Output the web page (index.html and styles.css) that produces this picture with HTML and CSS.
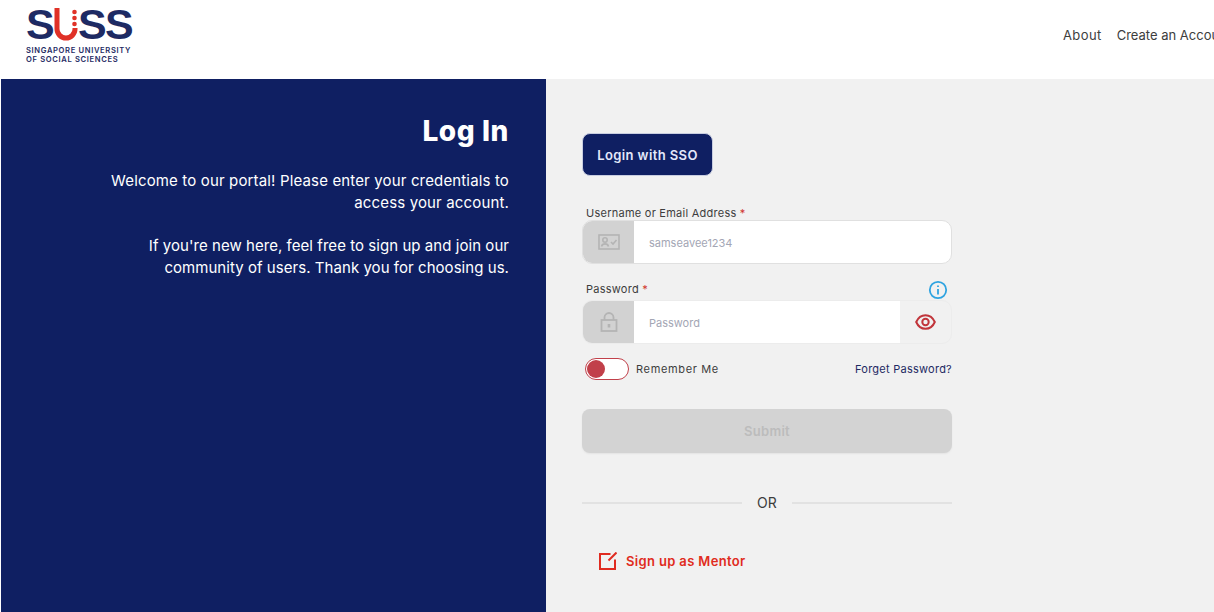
FILE: index.html
```html
<!DOCTYPE html>
<html lang="en">
<head>
<meta charset="UTF-8">
<title>SUSS - Log In</title>
<link rel="stylesheet" href="styles.css">
</head>
<body>

<!-- ===== TOP BAR ===== -->
<div class="top-bar">
  <div class="logo">
    <div class="logo-mark">
      <span class="logo-s">S</span>
      <svg class="logo-u" width="25" height="33" viewBox="0 0 25 33">
        <path d="M4 0V21a9 9 0 0 0 18 0V20" fill="none" stroke="#e03127" stroke-width="5"/>
        <circle cx="21.500" cy="4" r="2.300" fill="#e03127"/>
        <circle cx="21.500" cy="10" r="2.300" fill="#e03127"/>
        <circle cx="21.500" cy="16" r="2.300" fill="#e03127"/>
      </svg>
      <span class="logo-s">S</span>
      <span class="logo-s">S</span>
    </div>
    <div class="logo-text">SINGAPORE UNIVERSITY<br>OF SOCIAL SCIENCES</div>
  </div>
  <div class="nav">
    <a class="nav-about">About</a>
    <a>Create an Account</a>
  </div>
</div>

<div class="main">
  <!-- ===== LEFT PANEL ===== -->
  <div class="intro">
    <h1>Log In</h1>
    <p>Welcome to our portal! Please enter your credentials to<br>access your account.</p>
    <p>If you're new here, feel free to sign up and join our<br>community of users. Thank you for choosing us.</p>
  </div>

  <!-- ===== FORM ===== -->
  <div class="form-side">
    <div class="form">
      <button class="sso-btn">Login with SSO</button>

      <label class="field-label user-label">Username or Email Address <em>*</em></label>
      <div class="input-group">
        <div class="input-icon">
          <svg width="22" height="16" viewBox="0 0 22 16" fill="none" stroke="#b4b4b4" stroke-width="1.6">
            <rect x="1" y="1" width="20" height="14"/>
            <circle cx="7" cy="6" r="2.200"/>
            <path d="M3.500 12.500c.5-2 2-2.600 3.500-2.600s3 .6 3.500 2.600"/>
            <path d="M13 8l2 2 3.500-4"/>
          </svg>
        </div>
        <div class="input-value">samseavee1234</div>
      </div>

      <div class="password-head">
        <label class="field-label">Password <em>*</em></label>
        <svg class="info-icon" width="20" height="20" viewBox="0 0 20 20" fill="none" stroke="#2fa3e0" stroke-width="1.800">
          <circle cx="10" cy="10" r="8.200"/>
          <path d="M10 9v5.500"/>
          <path d="M10 5.400v1.600"/>
        </svg>
      </div>
      <div class="input-group password-group">
        <div class="input-icon">
          <svg width="18" height="20" viewBox="0 0 18 20" fill="none" stroke="#b4b4b4" stroke-width="1.800">
            <rect x="1.500" y="8" width="15" height="11"/>
            <path d="M4.500 8V5.500a4.500 4.500 0 0 1 9 0V8"/>
            <path d="M9 12v3.500" stroke-width="2.600"/>
          </svg>
        </div>
        <div class="input-value">Password</div>
        <div class="eye-box">
          <svg width="21" height="16" viewBox="0 0 21 16" fill="none" stroke="#c1353b" stroke-width="2">
            <path d="M1.200 8C3.200 3.500 6.500 1.200 10.500 1.200S17.800 3.500 19.800 8c-2 4.500-5.300 6.800-9.300 6.800S3.200 12.500 1.200 8z"/>
            <circle cx="10.500" cy="8" r="3.200"/>
          </svg>
        </div>
      </div>

      <div class="options-row">
        <div class="remember">
          <span class="toggle"><span class="toggle-knob"></span></span>
          Remember Me
        </div>
        <a class="forget">Forget Password?</a>
      </div>

      <button class="submit-btn">Submit</button>

      <div class="divider"><span>OR</span></div>

      <a class="signup">
        <svg width="18" height="18" viewBox="0 0 18 18" fill="none" stroke="#e02b20" stroke-width="2">
          <path d="M11.500 2H1v15h15V7.500"/>
          <path d="M17.500 .5L9.500 8.500"/>
        </svg>
        Sign up as Mentor
      </a>
    </div>
  </div>
</div>

</body>
</html>
```

FILE: styles.css
```css
* {
  box-sizing: border-box;
}

html, body {
  height: 100%;
}

body {
  margin: 0;
  background: white;
  font-family: Inter, "Open Sans", sans-serif;
  overflow: hidden;
  display: flex;
  flex-direction: column;
}

/* ===== TOP BAR ===== */
.top-bar {
  height: 79px;
  flex-shrink: 0;
  display: flex;
  padding-left: 26px;
  background: white;
}

.logo {
  width: 106px;
  flex-shrink: 0;
  padding-top: 8px;
}

.logo-mark {
  display: flex;
  align-items: flex-start;
  height: 33px;
  font-family: "Liberation Sans", sans-serif;
  font-weight: bold;
  font-size: 43px;
  line-height: 33px;
  color: #1e2a63;
}

.logo-s {
  width: 27px;
  flex-shrink: 0;
  text-align: center;
}

.logo-u {
  flex-shrink: 0;
}

.logo-text {
  margin-top: 4.500px;
  font-size: 7.600px;
  line-height: 9.500px;
  font-weight: 600;
  letter-spacing: 0.650px;
  white-space: nowrap;
  color: #1e2a63;
}

.nav {
  margin-left: 931px;
  padding-top: 27px;
  display: flex;
  gap: 15px;
  flex-shrink: 0;
  font-size: 13px;
  line-height: 16px;
  white-space: nowrap;
  color: #3d3d3d;
}

.nav-about {
  letter-spacing: 0.400px;
}

/* ===== MAIN ===== */
.main {
  flex: 1;
  display: flex;
  padding-left: 1px;
  background: white;
  min-height: 0;
}

.intro {
  width: 544.500px;
  flex-shrink: 0;
  padding: 36px 36.500px 0 0;
  background: #0f1f62;
  color: white;
  text-align: right;
}

.intro h1 {
  margin: 0 0 22px;
  font-size: 28px;
  line-height: 33px;
  font-weight: 800;
  letter-spacing: 0.600px;
}

.intro p {
  margin: 0 0 22px;
  font-size: 15px;
  line-height: 21.500px;
  letter-spacing: 0.150px;
}

.intro p + p {
  letter-spacing: 0.050px;
}

.form-side {
  flex: 1;
  padding: 54px 0 0 36.500px;
  background: #f1f1f1;
}

.form {
  width: 370px;
}

.sso-btn {
  display: block;
  width: 131px;
  height: 43px;
  border: 1px solid #c8cde0;
  border-radius: 8px;
  background: #0f1f62;
  color: #e4e8fa;
  font: 600 13px Inter, sans-serif;
  letter-spacing: 0.400px;
}

.field-label {
  display: block;
  padding-left: 4px;
  font-size: 11px;
  line-height: 14px;
  letter-spacing: 0.250px;
  color: #3d3d3d;
}

.field-label em {
  font-style: normal;
  color: #d0342c;
}

.user-label {
  margin-top: 30px;
}

.input-group {
  display: flex;
  height: 44px;
  border: 1px solid #e0e0e0;
  border-radius: 10px;
  background: white;
  overflow: hidden;
}

.input-icon {
  width: 51px;
  flex-shrink: 0;
  display: flex;
  align-items: center;
  justify-content: center;
  background: #d2d2d2;
}

.input-value {
  flex: 1;
  padding-left: 15px;
  font-size: 11px;
  line-height: 44px;
  color: #a3a6b4;
}

.password-head {
  display: flex;
  justify-content: space-between;
  align-items: flex-end;
  margin-top: 15px;
  height: 21px;
}

.password-head .field-label {
  margin-bottom: 4px;
}

.info-icon {
  margin-right: 4px;
}

.password-group {
  background: transparent;
  border-color: #ececec;
}

.password-group .input-value {
  background: white;
}

.eye-box {
  width: 51px;
  flex-shrink: 0;
  display: flex;
  align-items: center;
  justify-content: center;
}

.options-row {
  display: flex;
  justify-content: space-between;
  align-items: center;
  margin-top: 14px;
  height: 22px;
  padding-left: 3px;
}

.remember {
  display: flex;
  align-items: center;
  gap: 7px;
  font-size: 11px;
  letter-spacing: 0.650px;
  color: #3d3d3d;
}

.toggle {
  width: 44px;
  height: 22px;
  padding: 1px;
  border: 1px solid #c1404a;
  border-radius: 11px;
  background: white;
}

.toggle-knob {
  display: block;
  width: 18px;
  height: 18px;
  border-radius: 50%;
  background: #c1404a;
}

.forget {
  font-size: 11px;
  letter-spacing: 0.250px;
  color: #1e2a63;
}

.submit-btn {
  display: block;
  width: 100%;
  height: 44px;
  margin-top: 29px;
  border: none;
  border-radius: 8px;
  background: #d3d3d3;
  color: #bcbcbc;
  font: 600 13px Inter, sans-serif;
  letter-spacing: 0.300px;
  box-shadow: 0 1px 2px rgba(0, 0, 0, 0.06);
}

.divider {
  display: flex;
  align-items: center;
  gap: 15px;
  margin-top: 41px;
  font-size: 14px;
  line-height: 18px;
  letter-spacing: 0.200px;
  color: #3d3d3d;
}

.divider::before,
.divider::after {
  content: "";
  flex: 1;
  height: 2px;
  background: #e2e2e2;
}

.signup {
  display: flex;
  align-items: center;
  gap: 9px;
  margin-top: 40px;
  padding-left: 17px;
  font-size: 13px;
  line-height: 18px;
  font-weight: 600;
  letter-spacing: 0.350px;
  color: #e02b20;
}
```
